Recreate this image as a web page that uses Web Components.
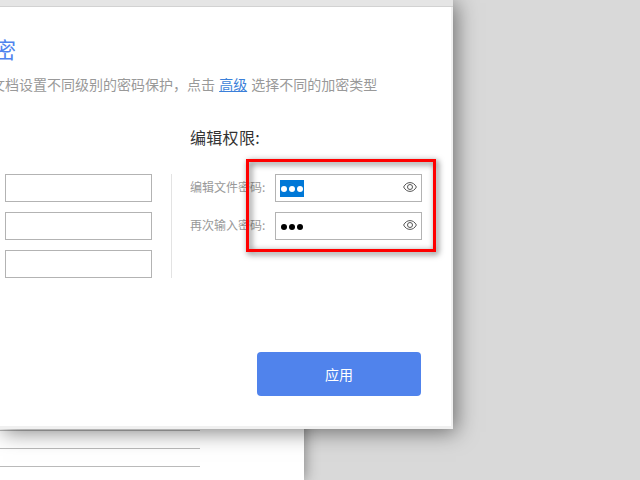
<!DOCTYPE html>
<html>
<head>
<meta charset="utf-8">
<style>
html,body{margin:0;padding:0;width:640px;height:480px;overflow:hidden;background:#d9d9d9;font-family:"Noto Sans CJK SC","Liberation Sans",sans-serif;}
a{color:#3b7fd9;text-decoration:underline;}
</style>
</head>
<body>
<doc-workspace>
  <pwd-dialog>
    <span slot="title">密</span>
    <span slot="desc">文档设置不同级别的密码保护，点击 <a>高级</a> 选择不同的加密类型</span>
    <pwd-field slot="open"></pwd-field>
    <pwd-field slot="open"></pwd-field>
    <pwd-field slot="open"></pwd-field>
    <pwd-row slot="edit" label="编辑文件密码:"><pwd-field dots selected eye></pwd-field></pwd-row>
    <pwd-row slot="edit" label="再次输入密码:"><pwd-field dots eye></pwd-field></pwd-row>
  </pwd-dialog>
</doc-workspace>
<script>
class DocWorkspace extends HTMLElement{
    constructor(){
        super();
        this.attachShadow({mode:'open'});
        this.shadowRoot.innerHTML = `
        <style>
            :host{display:flex;width:640px;height:480px;position:relative;overflow:hidden;}
            .paper{width:304px;background:#fff;box-shadow:0 0 14px rgba(0,0,0,.45);display:flex;flex-direction:column;padding-top:430px;box-sizing:border-box;gap:17px;}
            .paper i{display:block;width:200px;height:1px;background:#bababa;}
        </style>
        <div class="paper"><i></i><i></i><i></i></div>
        <slot></slot>`;
    }
}
customElements.define('doc-workspace',DocWorkspace);

class PwdDialog extends HTMLElement{
    constructor(){
        super();
        this.attachShadow({mode:'open'});
        this.shadowRoot.innerHTML = `
        <style>
            :host{display:block;position:absolute;left:0;top:0;width:453px;height:429px;box-sizing:border-box;background:#fff;
                border-right:2px solid #f0f0f0;border-bottom:3px solid #f0f0f0;
                box-shadow:3px 3px 20px rgba(0,0,0,.5);}
            .top{height:6px;background:#e5e5e5;border-bottom:1px solid #d2d2d2;margin-right:-2px;}
            .title{font-size:22px;line-height:30px;color:#4f83ee;margin:26px 0 0 -6px;height:30px;}
            .desc{font-size:14px;line-height:20px;color:#999;margin:11px 0 0 -9px;white-space:nowrap;word-spacing:1px;}
            h3{font-weight:400;font-size:16px;line-height:24px;color:#333;margin:31px 0 0 190px;letter-spacing:.3px;}
            .cols{display:flex;height:104px;margin-top:25px;}
            .open{width:172px;box-sizing:border-box;padding-left:5px;display:flex;flex-direction:column;gap:10px;border-right:1px solid #e3e3e3;}
            .edit{flex:1;padding-left:18px;display:flex;flex-direction:column;gap:10px;}
            .foot{display:flex;justify-content:flex-end;padding-right:30px;margin-top:74px;}
            button{width:164px;height:44px;border:0;border-radius:4px;background:#5083ec;color:#fff;font:14px "Noto Sans CJK SC",sans-serif;padding:0;}
            .mark{position:absolute;left:246px;top:159px;width:190px;height:93px;box-sizing:border-box;border:3px solid #f00;filter:drop-shadow(2px 2px 3px rgba(0,0,0,.65));pointer-events:none;}
        </style>
        <div class="top"></div>
        <div class="title"><slot name="title"></slot></div>
        <div class="desc"><slot name="desc"></slot></div>
        <h3>编辑权限:</h3>
        <div class="cols">
            <div class="open"><slot name="open"></slot></div>
            <div class="edit"><slot name="edit"></slot></div>
        </div>
        <div class="foot"><button>应用</button></div>
        <div class="mark"></div>`;
    }
}
customElements.define('pwd-dialog',PwdDialog);

class PwdRow extends HTMLElement{
    constructor(){
        super();
        this.attachShadow({mode:'open'});
        this.shadowRoot.innerHTML = `
        <style>
            :host{display:flex;align-items:center;width:232px;}
            span{width:85px;font-size:12px;color:#999;white-space:nowrap;flex:none;margin-bottom:3px;}
        </style>
        <span></span><slot></slot>`;
    }
    connectedCallback(){
        this.shadowRoot.querySelector('span').textContent = this.getAttribute('label');
    }
}
customElements.define('pwd-row',PwdRow);

class PwdField extends HTMLElement{
    constructor(){
        super();
        this.attachShadow({mode:'open'});
    }
    connectedCallback(){
        const dots = this.hasAttribute('dots');
        const sel = this.hasAttribute('selected');
        const eye = this.hasAttribute('eye');
        this.shadowRoot.innerHTML = `
        <style>
            :host{display:flex;align-items:center;justify-content:space-between;width:147px;height:28px;box-sizing:border-box;border:1px solid #b3b3b3;background:#fff;padding:0 4px;flex:none;}
            .v{display:flex;align-items:center;gap:2px;height:17px;padding:0 1px;margin-top:1px;}
            .v.sel{background:#0078d7;}
            .v b{display:block;width:6px;height:6px;border-radius:50%;background:#000;}
            .v.sel b{background:#fff;}
            svg{display:block;margin-bottom:2px;}
        </style>
        ${dots ? `<span class="v ${sel ? 'sel' : ''}"><b></b><b></b><b></b></span>` : ''}
        ${eye ? `<svg width="14" height="10" viewBox="0 0 14 10" fill="none" stroke="#555" stroke-width="1"><path d="M.6 5C2.2 2 4.4.6 7 .6s4.800 1.400 6.400 4.400C11.800 8 9.600 9.400 7 9.400S2.200 8 .6 5z"/><circle cx="7" cy="5" r="2.500"/></svg>` : ''}`;
    }
}
customElements.define('pwd-field',PwdField);
</script>
</body>
</html>
